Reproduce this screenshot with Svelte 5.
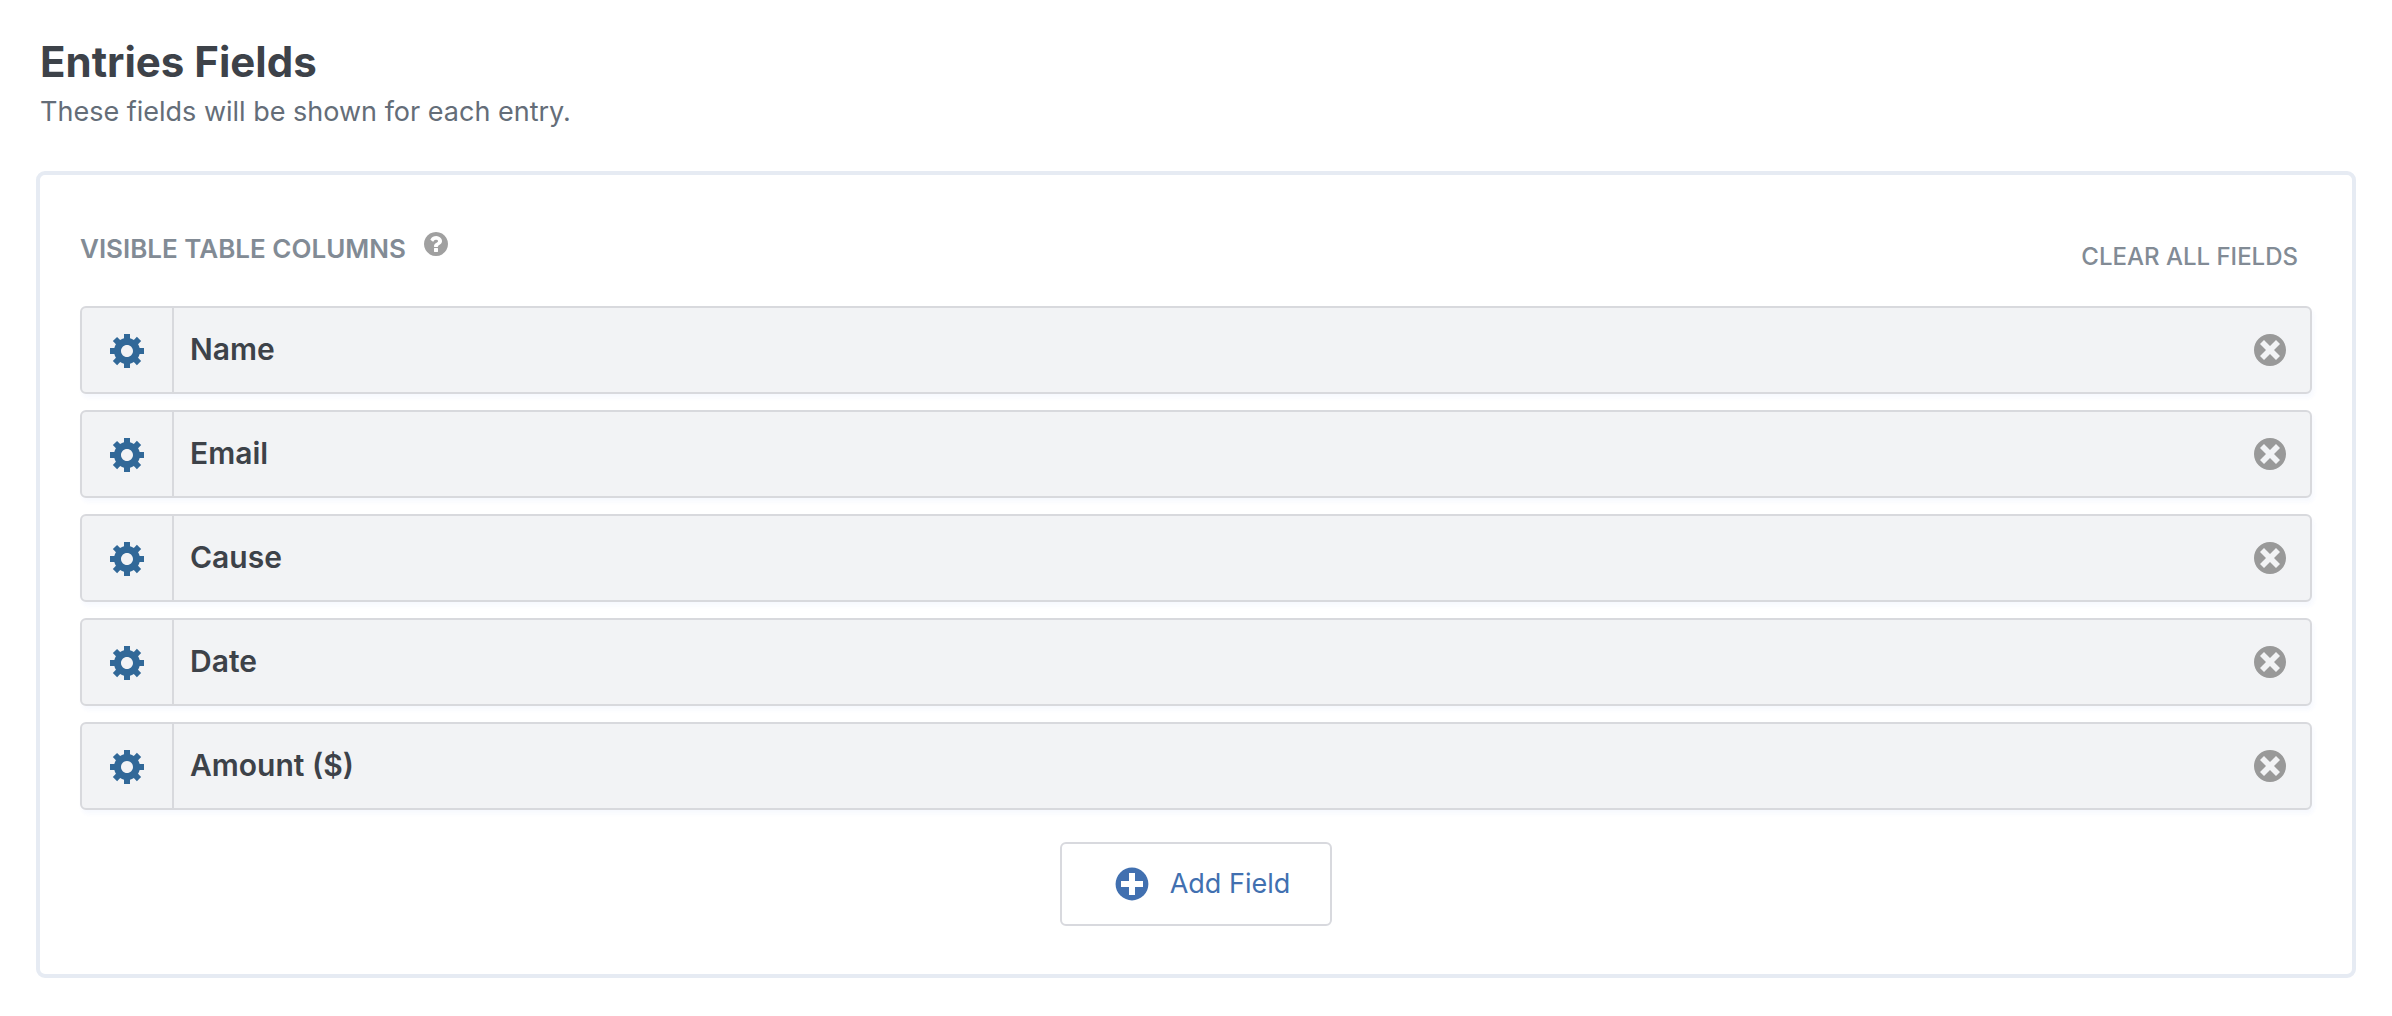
<script>
  let fields = $state(['Name', 'Email', 'Cause', 'Date', 'Amount ($)']);

  function remove(index) {
    fields.splice(index, 1);
  }

  function clearAll() {
    fields = [];
  }

  function add() {
    fields.push('New Field');
  }
</script>

<section class="page" aria-labelledby="entries-title">
  <header class="intro">
    <h1 id="entries-title">Entries Fields</h1>
    <p>These fields will be shown for each entry.</p>
  </header>

  <div class="panel">
    <div class="bar">
      <div class="label">
        <h2>Visible Table Columns</h2>
        <button class="icon-button help" type="button" aria-label="Help">
          <svg width="24" height="24" viewBox="128 128 1536 1536" aria-hidden="true">
            <path d="M1024 1376v-192q0-14-9-23t-23-9h-192q-14 0-23 9t-9 23v192q0 14 9 23t23 9h192q14 0 23-9t9-23zm256-672q0-88-55.5-163t-138.5-116-170-41q-243 0-371 213-15 24 8 42l132 100q7 6 19 6 16 0 25-12 53-68 86-92 34-24 86-24 48 0 85.500 26t37.500 59q0 38-20 61t-68 45q-63 28-115.500 86.500t-52.500 125.500v36q0 14 9 23t23 9h192q14 0 23-9t9-23q0-19 21.500-49.500t54.500-49.500q32-18 49-28.500t46-35 44.500-48 28-60.500 12.500-81zm384 192q0 209-103 385.500t-279.500 279.500-385.500 103-385.500-103-279.500-279.500-103-385.500 103-385.500 279.500-279.500 385.500-103 385.500 103 279.500 279.500 103 385.500z" />
          </svg>
        </button>
      </div>
      <button class="clear" type="button" onclick={clearAll}>Clear All Fields</button>
    </div>

    <ul class="fields">
      {#each fields as field, index}
        <li class="field">
          <button class="icon-button settings" type="button" aria-label="Settings for {field}">
            <svg width="34" height="34" viewBox="1 2 17 17" aria-hidden="true">
              <path d="M18 12h-2.180c-.17.7-.44 1.350-.81 1.930l1.540 1.540-2.100 2.100-1.540-1.540c-.58.36-1.230.63-1.910.79V19H8v-2.180c-.68-.16-1.330-.43-1.910-.79l-1.540 1.540-2.120-2.120 1.540-1.540c-.36-.58-.63-1.230-.79-1.910H1V9.030h2.170c.16-.7.44-1.350.8-1.940L2.430 5.550l2.100-2.100 1.540 1.540c.58-.37 1.240-.64 1.930-.81V2h3v2.180c.68.16 1.330.43 1.910.79l1.540-1.540 2.120 2.120-1.540 1.540c.36.59.64 1.240.8 1.940H18V12zm-8.500 1.500c1.660 0 3-1.340 3-3s-1.340-3-3-3-3 1.340-3 3 1.340 3 3 3z" />
            </svg>
          </button>
          <span class="name">{field}</span>
          <button class="icon-button remove" type="button" aria-label="Remove {field}" onclick={() => remove(index)}>
            <svg width="32" height="32" viewBox="2 2 16 16" aria-hidden="true">
              <path d="M10 2c4.420 0 8 3.580 8 8s-3.580 8-8 8-8-3.580-8-8 3.580-8 8-8zm5 11l-3-3 3-3-2-2-3 3-3-3-2 2 3 3-3 3 2 2 3-3 3 3z" />
            </svg>
          </button>
        </li>
      {/each}
    </ul>

    <button class="add" type="button" onclick={add}>
      <svg width="40" height="40" viewBox="0 0 20 20" aria-hidden="true">
        <path d="M15.800 4.200c3.200 3.210 3.200 8.390 0 11.600-3.210 3.200-8.390 3.200-11.600 0C1 12.590 1 7.410 4.200 4.200 7.410 1 12.590 1 15.800 4.200zm-4.300 11.300v-4h4v-3h-4v-4h-3v4h-4v3h4v4h3z" />
      </svg>
      Add Field
    </button>
  </div>
</section>

<style>
  :global(body) {
    margin: 0;
    background: #fff;
  }

  .page {
    padding: 36px 36px 38px;
    font-family: Inter, 'Liberation Sans', sans-serif;
    color: #3d4249;
  }

  .intro {
    padding: 0 4px;
    margin-bottom: 35px;
  }

  h1,
  h2,
  p {
    margin: 0;
  }

  h1 {
    font-size: 42px;
    line-height: 52px;
    font-weight: 700;
  }

  p {
    font-size: 27px;
    line-height: 48px;
    color: #646d78;
  }

  .panel {
    display: flex;
    flex-direction: column;
    padding: 48px 40px;
    border: 4px solid #e6ebf3;
    border-radius: 9px;
  }

  .bar {
    display: flex;
    justify-content: space-between;
    align-items: flex-end;
    padding: 0 14px 0 0;
    margin-bottom: 31px;
  }

  .label {
    display: flex;
    align-items: flex-start;
    gap: 18px;
    padding: 8px 0;
  }

  h2 {
    font-size: 26px;
    line-height: 36px;
    font-weight: 600;
    text-transform: uppercase;
    color: #828b95;
  }

  button {
    font: inherit;
    cursor: pointer;
  }

  svg {
    display: block;
    flex: none;
    fill: currentColor;
  }

  .icon-button {
    display: flex;
    align-items: center;
    justify-content: center;
    padding: 0;
    border: 0;
    background: none;
  }

  .help {
    padding-top: 1px;
    color: #a0a0a0;
  }

  .clear {
    padding: 0;
    border: 0;
    background: none;
    font-size: 24px;
    line-height: 36px;
    font-weight: 500;
    text-transform: uppercase;
    color: #828b95;
  }

  .fields {
    display: grid;
    gap: 16px;
    margin: 0;
    padding: 0;
    list-style: none;
  }

  .field {
    display: flex;
    align-items: stretch;
    border: 2px solid #d8d9dd;
    border-radius: 6px;
    background: #f2f3f5;
    box-shadow: 2px 4px 4px rgba(60, 100, 220, 0.04);
  }

  .settings {
    width: 92px;
    padding-top: 2px;
    border-right: 2px solid #d8d9dd;
    color: #316898;
  }

  .name {
    flex: 1;
    padding: 21px 16px 23px;
    font-size: 30px;
    line-height: 40px;
    font-weight: 600;
  }

  .remove {
    padding: 0 24px;
    color: #999;
  }

  .add {
    display: flex;
    align-items: center;
    align-self: center;
    gap: 18px;
    margin-top: 32px;
    padding: 20px 40px 20px 50px;
    border: 2px solid #d8d9de;
    border-radius: 6px;
    background: #fff;
    font-size: 27px;
    line-height: 40px;
    color: #4170b0;
  }
</style>
